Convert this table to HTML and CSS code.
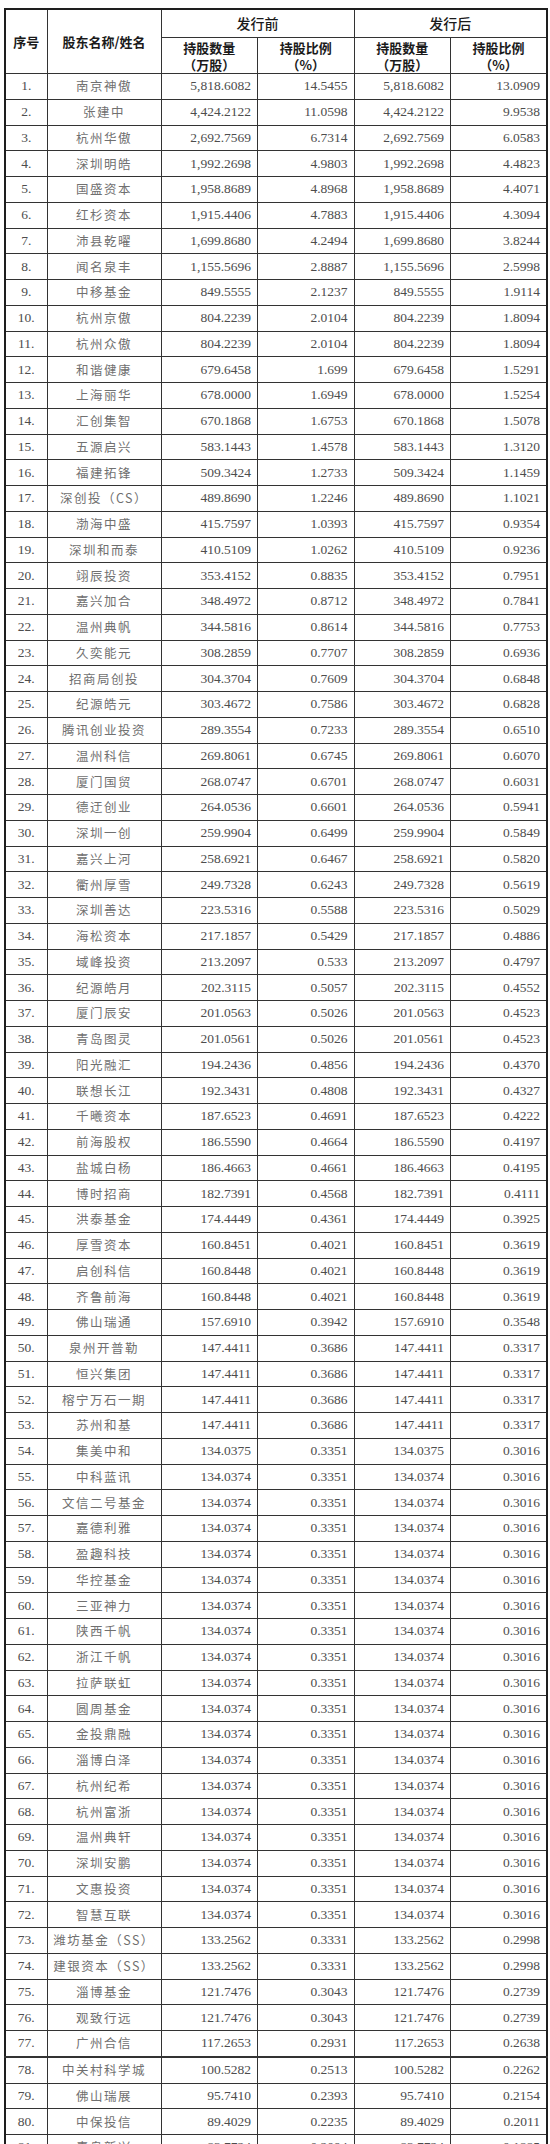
FILE: index.html
```html
<!DOCTYPE html>
<html lang="zh-CN">
<head>
<meta charset="utf-8">
<title>股东持股情况</title>
<link rel="stylesheet" href="styles.css">
</head>
<body>
<table class="holdings">
  <colgroup>
    <col class="c-idx"><col class="c-name"><col class="c-num"><col class="c-num"><col class="c-num"><col class="c-num">
  </colgroup>
  <thead>
    <tr class="head-top">
      <th rowspan="2">序号</th>
      <th rowspan="2">股东名称/姓名</th>
      <th colspan="2" class="grp">发行前</th>
      <th colspan="2" class="grp">发行后</th>
    </tr>
    <tr class="head-sub">
      <th>持股数量<br>（万股）</th>
      <th>持股比例<br>（%）</th>
      <th>持股数量<br>（万股）</th>
      <th>持股比例<br>（%）</th>
    </tr>
  </thead>
  <tbody>
    <tr><td class="idx">1.</td><td class="name">南京神傲</td><td class="num">5,818.6082</td><td class="num">14.5455</td><td class="num">5,818.6082</td><td class="num">13.0909</td></tr>
    <tr><td class="idx">2.</td><td class="name">张建中</td><td class="num">4,424.2122</td><td class="num">11.0598</td><td class="num">4,424.2122</td><td class="num">9.9538</td></tr>
    <tr><td class="idx">3.</td><td class="name">杭州华傲</td><td class="num">2,692.7569</td><td class="num">6.7314</td><td class="num">2,692.7569</td><td class="num">6.0583</td></tr>
    <tr><td class="idx">4.</td><td class="name">深圳明皓</td><td class="num">1,992.2698</td><td class="num">4.9803</td><td class="num">1,992.2698</td><td class="num">4.4823</td></tr>
    <tr><td class="idx">5.</td><td class="name">国盛资本</td><td class="num">1,958.8689</td><td class="num">4.8968</td><td class="num">1,958.8689</td><td class="num">4.4071</td></tr>
    <tr><td class="idx">6.</td><td class="name">红杉资本</td><td class="num">1,915.4406</td><td class="num">4.7883</td><td class="num">1,915.4406</td><td class="num">4.3094</td></tr>
    <tr><td class="idx">7.</td><td class="name">沛县乾曜</td><td class="num">1,699.8680</td><td class="num">4.2494</td><td class="num">1,699.8680</td><td class="num">3.8244</td></tr>
    <tr><td class="idx">8.</td><td class="name">闻名泉丰</td><td class="num">1,155.5696</td><td class="num">2.8887</td><td class="num">1,155.5696</td><td class="num">2.5998</td></tr>
    <tr><td class="idx">9.</td><td class="name">中移基金</td><td class="num">849.5555</td><td class="num">2.1237</td><td class="num">849.5555</td><td class="num">1.9114</td></tr>
    <tr><td class="idx">10.</td><td class="name">杭州京傲</td><td class="num">804.2239</td><td class="num">2.0104</td><td class="num">804.2239</td><td class="num">1.8094</td></tr>
    <tr><td class="idx">11.</td><td class="name">杭州众傲</td><td class="num">804.2239</td><td class="num">2.0104</td><td class="num">804.2239</td><td class="num">1.8094</td></tr>
    <tr><td class="idx">12.</td><td class="name">和谐健康</td><td class="num">679.6458</td><td class="num">1.699</td><td class="num">679.6458</td><td class="num">1.5291</td></tr>
    <tr><td class="idx">13.</td><td class="name">上海丽华</td><td class="num">678.0000</td><td class="num">1.6949</td><td class="num">678.0000</td><td class="num">1.5254</td></tr>
    <tr><td class="idx">14.</td><td class="name">汇创集智</td><td class="num">670.1868</td><td class="num">1.6753</td><td class="num">670.1868</td><td class="num">1.5078</td></tr>
    <tr><td class="idx">15.</td><td class="name">五源启兴</td><td class="num">583.1443</td><td class="num">1.4578</td><td class="num">583.1443</td><td class="num">1.3120</td></tr>
    <tr><td class="idx">16.</td><td class="name">福建拓锋</td><td class="num">509.3424</td><td class="num">1.2733</td><td class="num">509.3424</td><td class="num">1.1459</td></tr>
    <tr><td class="idx">17.</td><td class="name">深创投（CS）</td><td class="num">489.8690</td><td class="num">1.2246</td><td class="num">489.8690</td><td class="num">1.1021</td></tr>
    <tr><td class="idx">18.</td><td class="name">渤海中盛</td><td class="num">415.7597</td><td class="num">1.0393</td><td class="num">415.7597</td><td class="num">0.9354</td></tr>
    <tr><td class="idx">19.</td><td class="name">深圳和而泰</td><td class="num">410.5109</td><td class="num">1.0262</td><td class="num">410.5109</td><td class="num">0.9236</td></tr>
    <tr><td class="idx">20.</td><td class="name">翊辰投资</td><td class="num">353.4152</td><td class="num">0.8835</td><td class="num">353.4152</td><td class="num">0.7951</td></tr>
    <tr><td class="idx">21.</td><td class="name">嘉兴加合</td><td class="num">348.4972</td><td class="num">0.8712</td><td class="num">348.4972</td><td class="num">0.7841</td></tr>
    <tr><td class="idx">22.</td><td class="name">温州典帆</td><td class="num">344.5816</td><td class="num">0.8614</td><td class="num">344.5816</td><td class="num">0.7753</td></tr>
    <tr><td class="idx">23.</td><td class="name">久奕能元</td><td class="num">308.2859</td><td class="num">0.7707</td><td class="num">308.2859</td><td class="num">0.6936</td></tr>
    <tr><td class="idx">24.</td><td class="name">招商局创投</td><td class="num">304.3704</td><td class="num">0.7609</td><td class="num">304.3704</td><td class="num">0.6848</td></tr>
    <tr><td class="idx">25.</td><td class="name">纪源皓元</td><td class="num">303.4672</td><td class="num">0.7586</td><td class="num">303.4672</td><td class="num">0.6828</td></tr>
    <tr><td class="idx">26.</td><td class="name">腾讯创业投资</td><td class="num">289.3554</td><td class="num">0.7233</td><td class="num">289.3554</td><td class="num">0.6510</td></tr>
    <tr><td class="idx">27.</td><td class="name">温州科信</td><td class="num">269.8061</td><td class="num">0.6745</td><td class="num">269.8061</td><td class="num">0.6070</td></tr>
    <tr><td class="idx">28.</td><td class="name">厦门国贸</td><td class="num">268.0747</td><td class="num">0.6701</td><td class="num">268.0747</td><td class="num">0.6031</td></tr>
    <tr><td class="idx">29.</td><td class="name">德迂创业</td><td class="num">264.0536</td><td class="num">0.6601</td><td class="num">264.0536</td><td class="num">0.5941</td></tr>
    <tr><td class="idx">30.</td><td class="name">深圳一创</td><td class="num">259.9904</td><td class="num">0.6499</td><td class="num">259.9904</td><td class="num">0.5849</td></tr>
    <tr><td class="idx">31.</td><td class="name">嘉兴上河</td><td class="num">258.6921</td><td class="num">0.6467</td><td class="num">258.6921</td><td class="num">0.5820</td></tr>
    <tr><td class="idx">32.</td><td class="name">衢州厚雪</td><td class="num">249.7328</td><td class="num">0.6243</td><td class="num">249.7328</td><td class="num">0.5619</td></tr>
    <tr><td class="idx">33.</td><td class="name">深圳善达</td><td class="num">223.5316</td><td class="num">0.5588</td><td class="num">223.5316</td><td class="num">0.5029</td></tr>
    <tr><td class="idx">34.</td><td class="name">海松资本</td><td class="num">217.1857</td><td class="num">0.5429</td><td class="num">217.1857</td><td class="num">0.4886</td></tr>
    <tr><td class="idx">35.</td><td class="name">域峰投资</td><td class="num">213.2097</td><td class="num">0.533</td><td class="num">213.2097</td><td class="num">0.4797</td></tr>
    <tr><td class="idx">36.</td><td class="name">纪源皓月</td><td class="num">202.3115</td><td class="num">0.5057</td><td class="num">202.3115</td><td class="num">0.4552</td></tr>
    <tr><td class="idx">37.</td><td class="name">厦门辰安</td><td class="num">201.0563</td><td class="num">0.5026</td><td class="num">201.0563</td><td class="num">0.4523</td></tr>
    <tr><td class="idx">38.</td><td class="name">青岛图灵</td><td class="num">201.0561</td><td class="num">0.5026</td><td class="num">201.0561</td><td class="num">0.4523</td></tr>
    <tr><td class="idx">39.</td><td class="name">阳光融汇</td><td class="num">194.2436</td><td class="num">0.4856</td><td class="num">194.2436</td><td class="num">0.4370</td></tr>
    <tr><td class="idx">40.</td><td class="name">联想长江</td><td class="num">192.3431</td><td class="num">0.4808</td><td class="num">192.3431</td><td class="num">0.4327</td></tr>
    <tr><td class="idx">41.</td><td class="name">千曦资本</td><td class="num">187.6523</td><td class="num">0.4691</td><td class="num">187.6523</td><td class="num">0.4222</td></tr>
    <tr><td class="idx">42.</td><td class="name">前海股权</td><td class="num">186.5590</td><td class="num">0.4664</td><td class="num">186.5590</td><td class="num">0.4197</td></tr>
    <tr><td class="idx">43.</td><td class="name">盐城白杨</td><td class="num">186.4663</td><td class="num">0.4661</td><td class="num">186.4663</td><td class="num">0.4195</td></tr>
    <tr><td class="idx">44.</td><td class="name">博时招商</td><td class="num">182.7391</td><td class="num">0.4568</td><td class="num">182.7391</td><td class="num">0.4111</td></tr>
    <tr><td class="idx">45.</td><td class="name">洪泰基金</td><td class="num">174.4449</td><td class="num">0.4361</td><td class="num">174.4449</td><td class="num">0.3925</td></tr>
    <tr><td class="idx">46.</td><td class="name">厚雪资本</td><td class="num">160.8451</td><td class="num">0.4021</td><td class="num">160.8451</td><td class="num">0.3619</td></tr>
    <tr><td class="idx">47.</td><td class="name">启创科信</td><td class="num">160.8448</td><td class="num">0.4021</td><td class="num">160.8448</td><td class="num">0.3619</td></tr>
    <tr><td class="idx">48.</td><td class="name">齐鲁前海</td><td class="num">160.8448</td><td class="num">0.4021</td><td class="num">160.8448</td><td class="num">0.3619</td></tr>
    <tr><td class="idx">49.</td><td class="name">佛山瑞通</td><td class="num">157.6910</td><td class="num">0.3942</td><td class="num">157.6910</td><td class="num">0.3548</td></tr>
    <tr><td class="idx">50.</td><td class="name">泉州开普勒</td><td class="num">147.4411</td><td class="num">0.3686</td><td class="num">147.4411</td><td class="num">0.3317</td></tr>
    <tr><td class="idx">51.</td><td class="name">恒兴集团</td><td class="num">147.4411</td><td class="num">0.3686</td><td class="num">147.4411</td><td class="num">0.3317</td></tr>
    <tr><td class="idx">52.</td><td class="name">榕宁万石一期</td><td class="num">147.4411</td><td class="num">0.3686</td><td class="num">147.4411</td><td class="num">0.3317</td></tr>
    <tr><td class="idx">53.</td><td class="name">苏州和基</td><td class="num">147.4411</td><td class="num">0.3686</td><td class="num">147.4411</td><td class="num">0.3317</td></tr>
    <tr><td class="idx">54.</td><td class="name">集美中和</td><td class="num">134.0375</td><td class="num">0.3351</td><td class="num">134.0375</td><td class="num">0.3016</td></tr>
    <tr><td class="idx">55.</td><td class="name">中科蓝讯</td><td class="num">134.0374</td><td class="num">0.3351</td><td class="num">134.0374</td><td class="num">0.3016</td></tr>
    <tr><td class="idx">56.</td><td class="name">文信二号基金</td><td class="num">134.0374</td><td class="num">0.3351</td><td class="num">134.0374</td><td class="num">0.3016</td></tr>
    <tr><td class="idx">57.</td><td class="name">嘉德利雅</td><td class="num">134.0374</td><td class="num">0.3351</td><td class="num">134.0374</td><td class="num">0.3016</td></tr>
    <tr><td class="idx">58.</td><td class="name">盈趣科技</td><td class="num">134.0374</td><td class="num">0.3351</td><td class="num">134.0374</td><td class="num">0.3016</td></tr>
    <tr><td class="idx">59.</td><td class="name">华控基金</td><td class="num">134.0374</td><td class="num">0.3351</td><td class="num">134.0374</td><td class="num">0.3016</td></tr>
    <tr><td class="idx">60.</td><td class="name">三亚神力</td><td class="num">134.0374</td><td class="num">0.3351</td><td class="num">134.0374</td><td class="num">0.3016</td></tr>
    <tr><td class="idx">61.</td><td class="name">陕西千帆</td><td class="num">134.0374</td><td class="num">0.3351</td><td class="num">134.0374</td><td class="num">0.3016</td></tr>
    <tr><td class="idx">62.</td><td class="name">浙江千帆</td><td class="num">134.0374</td><td class="num">0.3351</td><td class="num">134.0374</td><td class="num">0.3016</td></tr>
    <tr><td class="idx">63.</td><td class="name">拉萨联虹</td><td class="num">134.0374</td><td class="num">0.3351</td><td class="num">134.0374</td><td class="num">0.3016</td></tr>
    <tr><td class="idx">64.</td><td class="name">圆周基金</td><td class="num">134.0374</td><td class="num">0.3351</td><td class="num">134.0374</td><td class="num">0.3016</td></tr>
    <tr><td class="idx">65.</td><td class="name">金投鼎融</td><td class="num">134.0374</td><td class="num">0.3351</td><td class="num">134.0374</td><td class="num">0.3016</td></tr>
    <tr><td class="idx">66.</td><td class="name">淄博白泽</td><td class="num">134.0374</td><td class="num">0.3351</td><td class="num">134.0374</td><td class="num">0.3016</td></tr>
    <tr><td class="idx">67.</td><td class="name">杭州纪希</td><td class="num">134.0374</td><td class="num">0.3351</td><td class="num">134.0374</td><td class="num">0.3016</td></tr>
    <tr><td class="idx">68.</td><td class="name">杭州富浙</td><td class="num">134.0374</td><td class="num">0.3351</td><td class="num">134.0374</td><td class="num">0.3016</td></tr>
    <tr><td class="idx">69.</td><td class="name">温州典轩</td><td class="num">134.0374</td><td class="num">0.3351</td><td class="num">134.0374</td><td class="num">0.3016</td></tr>
    <tr><td class="idx">70.</td><td class="name">深圳安鹏</td><td class="num">134.0374</td><td class="num">0.3351</td><td class="num">134.0374</td><td class="num">0.3016</td></tr>
    <tr><td class="idx">71.</td><td class="name">文惠投资</td><td class="num">134.0374</td><td class="num">0.3351</td><td class="num">134.0374</td><td class="num">0.3016</td></tr>
    <tr><td class="idx">72.</td><td class="name">智慧互联</td><td class="num">134.0374</td><td class="num">0.3351</td><td class="num">134.0374</td><td class="num">0.3016</td></tr>
    <tr><td class="idx">73.</td><td class="name">潍坊基金（SS）</td><td class="num">133.2562</td><td class="num">0.3331</td><td class="num">133.2562</td><td class="num">0.2998</td></tr>
    <tr><td class="idx">74.</td><td class="name">建银资本（SS）</td><td class="num">133.2562</td><td class="num">0.3331</td><td class="num">133.2562</td><td class="num">0.2998</td></tr>
    <tr><td class="idx">75.</td><td class="name">淄博基金</td><td class="num">121.7476</td><td class="num">0.3043</td><td class="num">121.7476</td><td class="num">0.2739</td></tr>
    <tr><td class="idx">76.</td><td class="name">观致行远</td><td class="num">121.7476</td><td class="num">0.3043</td><td class="num">121.7476</td><td class="num">0.2739</td></tr>
    <tr class="seam"><td class="idx">77.</td><td class="name">广州合信</td><td class="num">117.2653</td><td class="num">0.2931</td><td class="num">117.2653</td><td class="num">0.2638</td></tr>
    <tr><td class="idx">78.</td><td class="name">中关村科学城</td><td class="num">100.5282</td><td class="num">0.2513</td><td class="num">100.5282</td><td class="num">0.2262</td></tr>
    <tr><td class="idx">79.</td><td class="name">佛山瑞展</td><td class="num">95.7410</td><td class="num">0.2393</td><td class="num">95.7410</td><td class="num">0.2154</td></tr>
    <tr><td class="idx">80.</td><td class="name">中保投信</td><td class="num">89.4029</td><td class="num">0.2235</td><td class="num">89.4029</td><td class="num">0.2011</td></tr>
    <tr><td class="idx">81.</td><td class="name">青岛新兴</td><td class="num">83.7724</td><td class="num">0.2094</td><td class="num">83.7724</td><td class="num">0.1885</td></tr>
  </tbody>
</table>
</body>
</html>
```

FILE: styles.css
```css
html, body {
  margin: 0;
  padding: 0;
  background: #ffffff;
}

.holdings {
  margin: 8px 0 0 4px;
  width: 542px;
  table-layout: fixed;
  border-collapse: collapse;
  border: 2px solid #1e1e1e;
  font-family: "Liberation Serif", "Noto Sans CJK SC", serif;
}

.c-idx { width: 42px; }
.c-name { width: 114px; }
.c-num { width: 96.5px; }

.holdings th,
.holdings td {
  border: 1px solid #333333;
  padding: 0;
  vertical-align: middle;
}

.holdings th {
  font-family: "Noto Sans CJK SC", "Liberation Sans", sans-serif;
  font-weight: 700;
  font-size: 13px;
  line-height: 17px;
  color: #1a1a1a;
  text-align: center;
}

.head-top th.grp {
  height: 27px;
  font-weight: 500;
  font-size: 14px;
}

.head-sub th {
  height: 35px;
}

.holdings td {
  height: 24.75px;
  font-size: 13.5px;
  color: #4d4d4d;
  line-height: 16px;
}

.holdings td.idx {
  text-align: center;
}

.holdings td.name {
  text-align: center;
  font-family: "Noto Sans CJK SC", sans-serif;
  font-size: 12.5px;
  letter-spacing: 1.5px;
  color: #707070;
}

.holdings td.num {
  text-align: right;
  padding-right: 6px;
}

.seam td {
  border-bottom-width: 2px;
}
```
